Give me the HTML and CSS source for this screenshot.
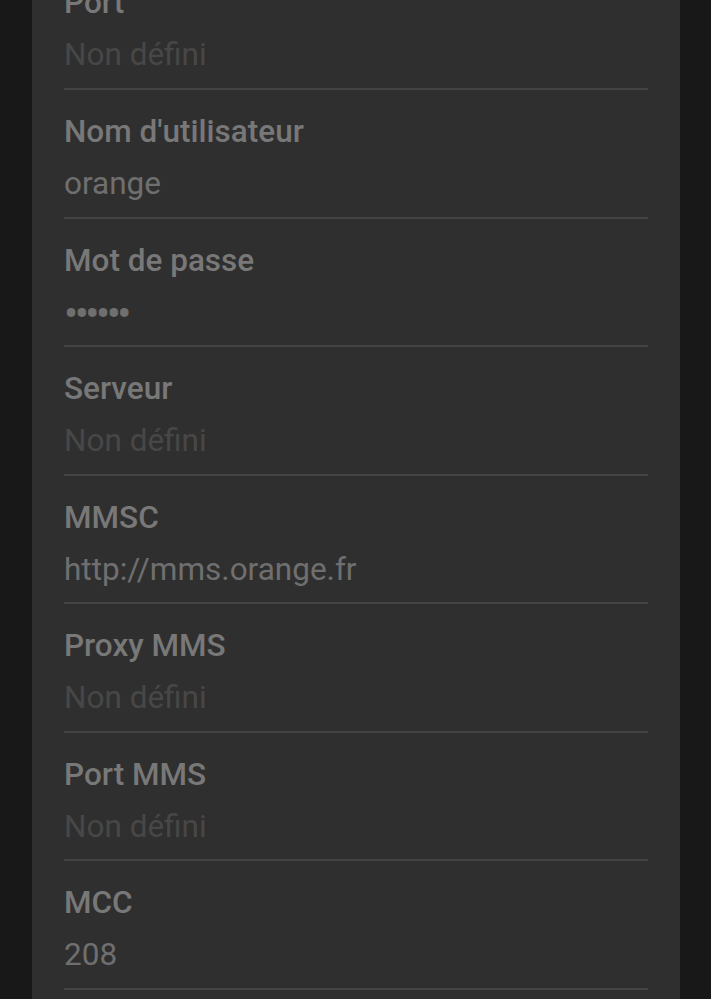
FILE: index.html
```html
<!DOCTYPE html>
<html lang="fr">
<head>
    <meta charset="UTF-8">
    <meta name="viewport" content="width=device-width, initial-scale=1.0">
    <title>Modifier le point d'accès</title>
    <link rel="stylesheet" href="styles.css">
</head>
<body>
    <div class="panel">
        <div class="pref">
            <div class="pref-title">Port</div>
            <div class="pref-value empty">Non défini</div>
        </div>
        <div class="pref">
            <div class="pref-title">Nom d'utilisateur</div>
            <div class="pref-value">orange</div>
        </div>
        <div class="pref">
            <div class="pref-title">Mot de passe</div>
            <div class="pref-value password">••••••</div>
        </div>
        <div class="pref">
            <div class="pref-title">Serveur</div>
            <div class="pref-value empty">Non défini</div>
        </div>
        <div class="pref">
            <div class="pref-title">MMSC</div>
            <div class="pref-value">http://mms.orange.fr</div>
        </div>
        <div class="pref">
            <div class="pref-title">Proxy MMS</div>
            <div class="pref-value empty">Non défini</div>
        </div>
        <div class="pref">
            <div class="pref-title">Port MMS</div>
            <div class="pref-value empty">Non défini</div>
        </div>
        <div class="pref">
            <div class="pref-title">MCC</div>
            <div class="pref-value">208</div>
        </div>
    </div>
</body>
</html>
```

FILE: styles.css
```css
body {
    margin: 0;
    padding: 0;
    background: #181818;
    font-family: Roboto, "Noto Sans", sans-serif;
    overflow: hidden;
    height: 999px;
}
.panel {
    background: #2f2f2f;
    margin: -38.57px 31px 0 32px;
    padding: 0 32px 20px;
}
.pref {
    padding: 22px 0 12.57px;
    border-bottom: 2px solid #444444;
}
.pref-title {
    font-size: 31.5px;
    line-height: 40px;
    font-weight: 500;
    color: #787878;
}
.pref-value {
    margin-top: 12px;
    font-size: 31.5px;
    line-height: 40px;
    color: #6f6f6f;
}
.pref-value.empty {
    color: #474747;
}
.pref-value.password {
    font-size: 42px;
    line-height: 42px;
    letter-spacing: -3.5px;
    margin-bottom: -2px;
}
```
